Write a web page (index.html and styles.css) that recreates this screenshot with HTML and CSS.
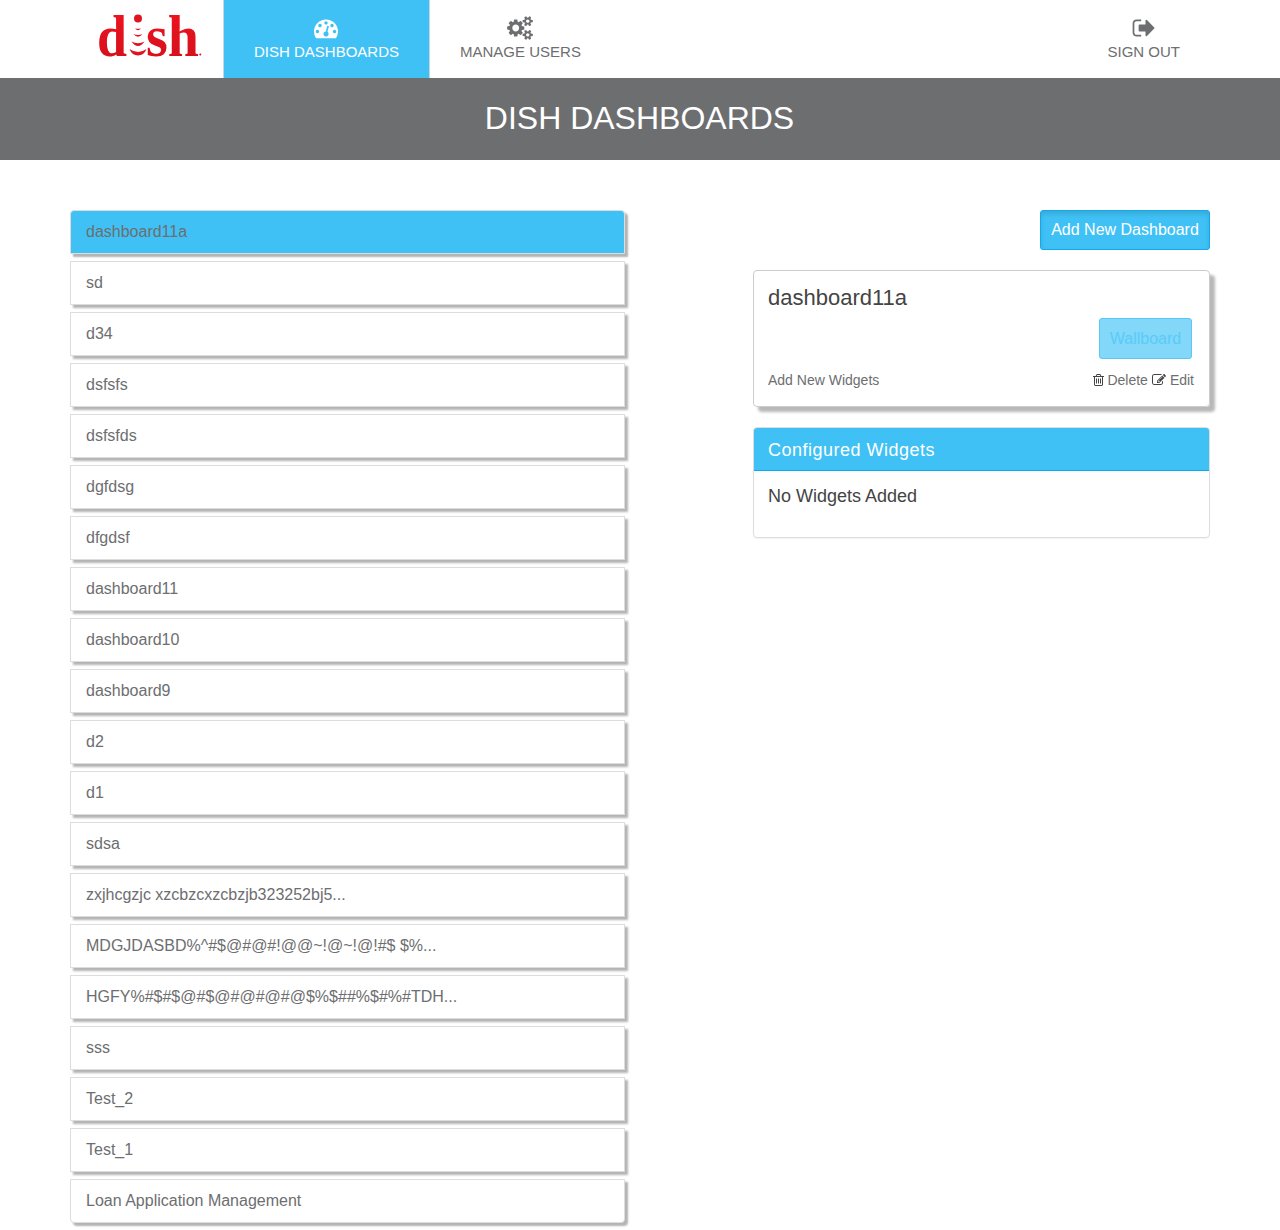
FILE: index.html
```html
<!DOCTYPE html>
<html lang="en">
<head>
<meta charset="utf-8">
<title>Dish Dashboards</title>
<link rel="stylesheet" href="styles.css">
</head>
<body>
<header class="topbar">
  <a class="logo">
    <svg width="112" height="78" viewBox="0 -11 112 78" role="img" aria-label="dish">
      <defs><linearGradient id="red" x1="0" y1="0" x2="0" y2="1"><stop offset="0" stop-color="#f2141f"/><stop offset="1" stop-color="#d0101c"/></linearGradient></defs>
      <g class="logo-text">
        <text x="1" y="44.500" textLength="30" lengthAdjust="spacingAndGlyphs">d</text>
        <text x="50" y="44.500" textLength="53" lengthAdjust="spacingAndGlyphs">sh</text>
      </g>
      <g fill="#e01420">
        <circle cx="42" cy="7.600" r="4"/>
        <path d="M39 17.2Q42 18.200 45 17.200Q42 21.200 39 17.200ZM37.500 23Q42 25 46.500 23Q42 28.500 37.500 23ZM35.500 30.500Q42 34 48.500 30.500Q42 39.500 35.500 30.500ZM33.500 38Q42 44 50.500 38Q48 44.500 42 44.500Q36 44.500 33.500 38Z"/>
        <circle cx="104.300" cy="43.500" r="1"/>
      </g>
    </svg>
  </a>
  <nav class="nav">
    <a class="nav-item active">
      <svg class="nav-icon gauge" viewBox="0 0 1792 1792"><path d="M384 1152q0-53-37.500-90.500t-90.500-37.500-90.500 37.500-37.500 90.500 37.500 90.500 90.500 37.500 90.500-37.500 37.500-90.500zm192-448q0-53-37.500-90.500t-90.500-37.500-90.500 37.500-37.500 90.500 37.500 90.500 90.500 37.500 90.500-37.500 37.500-90.500zm428 481l101-382q6-26-7.500-48.500t-38.500-29.500-48 6.500-30 39.500l-101 382q-60 5-107 43.500t-63 98.500q-20 77 20 146t117 89 146-20 89-117q16-60-6-117t-72-91zm660-33q0-53-37.500-90.500t-90.500-37.500-90.500 37.500-37.500 90.500 37.500 90.500 90.500 37.500 90.500-37.500 37.500-90.500zm-640-640q0-53-37.500-90.500t-90.500-37.500-90.500 37.500-37.500 90.500 37.500 90.500 90.500 37.500 90.500-37.500 37.500-90.500zm448 192q0-53-37.500-90.500t-90.500-37.500-90.500 37.500-37.500 90.500 37.500 90.500 90.500 37.500 90.500-37.500 37.500-90.500zm320 448q0 261-141 483-19 29-54 29h-1402q-35 0-54-29-141-221-141-483 0-182 71-348t191-286 286-191 348-71 348 71 286 191 191 286 71 348z"/></svg>
      <span>DISH DASHBOARDS</span>
    </a>
    <a class="nav-item users">
      <svg class="nav-icon wide" viewBox="-64 0 1920 1792"><path d="M832 896q0-106-75-181t-181-75-181 75-75 181 75 181 181 75 181-75 75-181zm768 512q0-52-38-90t-90-38-90 38-38 90q0 53 37.500 90.500t90.500 37.500 90.500-37.500 37.500-90.500zm0-1024q0-52-38-90t-90-38-90 38-38 90q0 53 37.500 90.500t90.500 37.500 90.500-37.500 37.500-90.500zm-384 421v185q0 10-7 19.500t-16 10.500l-155 24q-11 35-32 76 34 48 90 115 7 11 7 20 0 12-7 19-23 30-82.500 89.500t-78.500 59.500q-11 0-21-7l-115-90q-37 19-77 31-11 108-23 155-7 24-30 24h-186q-11 0-20-7.500t-10-17.500l-23-153q-34-10-75-31l-118 89q-7 7-20 7-11 0-21-8-144-133-144-160 0-9 7-19 10-14 41-53t47-61q-23-44-35-82l-152-24q-10-1-17-9.500t-7-19.500v-185q0-10 7-19.500t16-10.500l155-24q11-35 32-76-34-48-90-115-7-11-7-20 0-12 7-20 22-30 82-89t79-59q11 0 21 7l115 90q34-18 77-32 11-108 23-154 7-24 30-24h186q11 0 20 7.500t10 17.500l23 153q34 10 75 31l118-89q8-7 20-7 11 0 21 8 144 133 144 160 0 8-7 19-12 16-42 54t-45 60q23 48 34 82l152 23q10 2 17 10.500t7 19.500zm640 533v140q0 16-149 31-12 27-30 52 51 113 51 138 0 4-4 7-122 71-124 71-8 0-46-47t-52-68q-20 2-30 2t-30-2q-14 21-52 68t-46 47q-2 0-124-71-4-3-4-7 0-25 51-138-18-25-30-52-149-15-149-31v-140q0-16 149-31 13-29 30-52-51-113-51-138 0-4 4-7 4-2 35-20t59-34 30-16q8 0 46 46.500t52 67.500q20-2 30-2t30 2q51-71 92-112l6-2q4 0 124 70 4 3 4 7 0 25-51 138 17 23 30 52 149 15 149 31zm0-1024v140q0 16-149 31-12 27-30 52 51 113 51 138 0 4-4 7-122 71-124 71-8 0-46-47t-52-68q-20 2-30 2t-30-2q-14 21-52 68t-46 47q-2 0-124-71-4-3-4-7 0-25 51-138-18-25-30-52-149-15-149-31v-140q0-16 149-31 13-29 30-52-51-113-51-138 0-4 4-7 4-2 35-20t59-34 30-16q8 0 46 46.500t52 67.500q20-2 30-2t30 2q51-71 92-112l6-2q4 0 124 70 4 3 4 7 0 25-51 138 17 23 30 52 149 15 149 31z"/></svg>
      <span>MANAGE USERS</span>
    </a>
  </nav>
  <a class="nav-item sign-out">
    <svg class="nav-icon" viewBox="-48 0 1792 1792"><path d="M640 1440q0 4 1 20t.5 26.500-3 23.500-10 19.500-20.500 6.500h-320q-119 0-203.500-84.500t-84.500-203.500v-704q0-119 84.500-203.500t203.500-84.500h320q13 0 22.500 9.500t9.500 22.500q0 4 1 20t.5 26.500-3 23.500-10 19.500-20.500 6.500h-320q-66 0-113 47t-47 113v704q0 66 47 113t113 47h312l11.500 1 11.500 3 8 5.500 7 9 2 13.500zM1613 941l-544 544q-19 19-45 19t-45-19-19-45v-288h-448q-26 0-45-19t-19-45v-384q0-26 19-45t45-19h448v-288q0-26 19-45t45-19 45 19l544 544q19 19 19 45t-19 45z"/></svg>
    <span>SIGN OUT</span>
  </a>
</header>
<h1 class="title">DISH DASHBOARDS</h1>
<main class="content">
  <ul class="list">
    <li class="row selected">dashboard11a</li>
    <li class="row">sd</li>
    <li class="row">d34</li>
    <li class="row">dsfsfs</li>
    <li class="row">dsfsfds</li>
    <li class="row">dgfdsg</li>
    <li class="row">dfgdsf</li>
    <li class="row">dashboard11</li>
    <li class="row">dashboard10</li>
    <li class="row">dashboard9</li>
    <li class="row">d2</li>
    <li class="row">d1</li>
    <li class="row">sdsa</li>
    <li class="row">zxjhcgzjc xzcbzcxzcbzjb323252bj5...</li>
    <li class="row">MDGJDASBD%^#$@#@#!@@~!@~!@!#$ $%...</li>
    <li class="row">HGFY%#$#$@#$@#@#@#@$%$##%$#%#TDH...</li>
    <li class="row">sss</li>
    <li class="row">Test_2</li>
    <li class="row">Test_1</li>
    <li class="row">Loan Application Management</li>
  </ul>
  <section class="side">
    <button class="btn">Add New Dashboard</button>
    <div class="card">
      <h2 class="card-title">dashboard11a</h2>
      <button class="btn wallboard" disabled>Wallboard</button>
      <div class="card-foot">
        <a>Add New Widgets</a>
        <div class="actions">
          <svg class="icon trash" viewBox="192 0 1408 1792"><path d="M704 736v576q0 14-9 23t-23 9h-64q-14 0-23-9t-9-23v-576q0-14 9-23t23-9h64q14 0 23 9t9 23zm256 0v576q0 14-9 23t-23 9h-64q-14 0-23-9t-9-23v-576q0-14 9-23t23-9h64q14 0 23 9t9 23zm256 0v576q0 14-9 23t-23 9h-64q-14 0-23-9t-9-23v-576q0-14 9-23t23-9h64q14 0 23 9t9 23zm128 724v-948h-896v948q0 22 7 40.500t14.500 27 10.500 8.500h832q3 0 10.500-8.500t14.500-27 7-40.500zm-672-1076h448l-48-117q-7-9-17-11h-317q-10 2-17 11zm928 32v64q0 14-9 23t-23 9h-96v948q0 83-47 143.500t-113 60.500h-832q-66 0-113-58.500t-47-141.500v-952h-96q-14 0-23-9t-9-23v-64q0-14 9-23t23-9h309l70-167q15-37 54-63t79-26h320q40 0 79 26t54 63l70 167h309q14 0 23 9t9 23z"/></svg>
          <a>Delete</a>
          <svg class="icon" viewBox="0 0 1792 1792"><path d="M888 1184l116-116-152-152-116 116v56h96v96h56zm440-720q-16-16-33 1l-350 350q-17 17-1 33t33-1l350-350q17-17 1-33zm80 594v190q0 119-84.500 203.500t-203.500 84.500h-832q-119 0-203.500-84.500t-84.500-203.500v-832q0-119 84.500-203.500t203.500-84.500h832q63 0 117 25 15 7 18 23 3 17-9 29l-49 49q-14 14-32 8-23-6-45-6h-832q-66 0-113 47t-47 113v832q0 66 47 113t113 47h832q66 0 113-47t47-113v-126q0-13 9-22l64-64q15-15 35-7t20 29zm-96-738l288 288-672 672h-288v-288zm444 132l-92 92-288-288 92-92q28-28 68-28t68 28l152 152q28 28 28 68t-28 68z"/></svg>
          <a>Edit</a>
        </div>
      </div>
    </div>
    <div class="panel">
      <h3 class="panel-head">Configured Widgets</h3>
      <p class="panel-body">No Widgets Added</p>
    </div>
  </section>
</main>
</body>
</html>
```
FILE: styles.css
```css
* { box-sizing: border-box; }
body {
  margin: 0;
  min-height: 1230px;
  background: #fff;
  color: #6d6e70;
  font-family: "Liberation Sans", Arial, sans-serif;
  font-size: 16px;
}
h1, h2, h3, p, ul { margin: 0; padding: 0; font-weight: normal; }

.topbar { display: flex; height: 78px; padding: 0 70px 0 96px; }
.logo { width: 127px; }
.logo svg { display: block; }
.logo-text {
  fill: url(#red);
  font-family: "Liberation Serif", "Times New Roman", serif;
  font-size: 60px;
  font-weight: bold;
}
.nav { display: flex; }
.nav-item {
  display: flex;
  flex-direction: column;
  align-items: center;
  padding: 16px 30px 0;
  border: 1px solid transparent;
  border-width: 0 1px;
  font-size: 15px;
  line-height: 17px;
  white-space: nowrap;
}
.nav-item.active { background: #40c1f5; border-color: #c5d8e0; color: #fff; }
.nav-item.users { padding-left: 29px; }
.nav-icon { width: 24px; height: 24px; margin-bottom: 3px; fill: currentColor; }
.nav-icon.gauge { margin-right: 1px; }
.nav-icon.wide { width: 26px; }
.sign-out { margin-left: auto; padding-right: 29px; }

.title {
  height: 82px;
  padding-right: 1px;
  background: #6d6e70;
  color: #fff;
  font-size: 32px;
  line-height: 81px;
  text-align: center;
}

.content {
  display: flex;
  justify-content: space-between;
  align-items: flex-start;
  padding: 50px 70px 0;
}
.list {
  display: flex;
  flex-direction: column;
  gap: 7px;
  width: 555px;
  list-style: none;
}
.row {
  height: 44px;
  padding: 0 15px;
  border: 1px solid #ddd;
  background: #fff;
  box-shadow: 3px 3px 2px #b4b4b4;
  line-height: 42px;
}
.row:first-child { border-radius: 4px 4px 0 0; }
.row:last-child { border-radius: 0 0 4px 4px; }
.row.selected { background: #40c1f5; }

.side { display: flex; flex-direction: column; align-items: flex-end; width: 457px; }
.btn {
  width: 170px;
  height: 40px;
  padding: 0;
  border: 1px solid #0eaaf0;
  border-radius: 3px;
  background: #40c1f5;
  box-shadow: inset 0 3px 5px rgba(0, 0, 0, .125);
  color: #fff;
  font: 16px "Liberation Sans", Arial, sans-serif;
}
.card {
  display: flex;
  flex-direction: column;
  width: 100%;
  height: 137px;
  margin-top: 20px;
  padding: 14px 15px 14px 14px;
  border: 1px solid #ccc;
  border-radius: 4px;
  box-shadow: 5px 5px 3px #b8b8b8;
}
.card-title { color: #444; font-size: 22px; line-height: 25px; }
.wallboard {
  align-self: flex-end;
  width: 93px;
  height: 41px;
  margin: 8px 2px 0 0;
  border-color: #58c8f6;
  background: #83d7f9;
  box-shadow: none;
  color: #58ccf8;
}
.card-foot {
  display: flex;
  justify-content: space-between;
  margin-top: 13px;
  font-size: 14px;
  line-height: 16px;
}
.actions { display: flex; gap: 4px; }
.icon { width: 14px; height: 14px; margin-top: 1px; fill: #444; }
.icon.trash { width: 11px; margin-right: -1px; }

.panel {
  width: 100%;
  height: 111px;
  margin-top: 20px;
  border: 1px solid #ddd;
  border-radius: 4px;
  box-shadow: 0 1px 1px rgba(0, 0, 0, .05);
  font-size: 18px;
}
.panel-head {
  height: 43px;
  padding: 0 14px;
  border-bottom: 1px solid #0eaaf0;
  border-radius: 3px 3px 0 0;
  background: #40c1f5;
  color: #fff;
  font-size: 18px;
  letter-spacing: .5px;
  line-height: 44px;
}
.panel-body { padding: 15px 14px; color: #444; line-height: 21px; }
```
